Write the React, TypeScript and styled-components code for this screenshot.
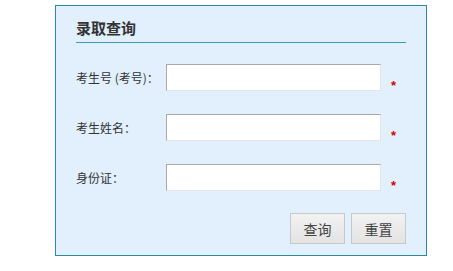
import React from "react";
import styled, { createGlobalStyle } from "styled-components";

const Global = createGlobalStyle`
  html, body { margin: 0; padding: 0; background: #fff; }
  body { font-family: "SimSun", "Noto Sans CJK SC", "DejaVu Sans", sans-serif; }
`;

const Page = styled.div`
  padding: 5px 0 0 55px;
`;

const Panel = styled.div`
  width: 372px;
  height: 251px;
  box-sizing: border-box;
  border: 1px solid #2a8ca2;
  background: #e1f0fc;
  padding: 0 20px 0 20px;
  display: flex;
  flex-direction: column;
`;

const Title = styled.h2`
  margin: 0;
  padding-top: 10px;
  height: 26px;
  line-height: 24px;
  font-size: 15px;
  font-weight: bold;
  color: #333;
  border-bottom: 1px solid #3a9db4;
`;

const Form = styled.div`
  display: flex;
  flex-direction: column;
  gap: 23px;
  padding-top: 21px;
`;

const Row = styled.div`
  display: flex;
  align-items: center;
  height: 27px;
`;

const Label = styled.span`
  width: 90px;
  font-size: 12px;
  color: #333;
`;

const Input = styled.input`
  width: 215px;
  height: 27px;
  box-sizing: border-box;
  border: 1px solid;
  border-color: #a9a9a9 #e4e4e4 #e4e4e4 #a9a9a9;
  background: #fff;
  margin: 0;
  padding: 0 4px;
  outline: none;
`;

const Star = styled.span`
  align-self: flex-end;
  margin-left: 10px;
  margin-bottom: -2px;
  color: #d60000;
  font-size: 13px;
  line-height: 14px;
  font-family: "Liberation Sans", sans-serif;
  font-weight: bold;
`;

const Actions = styled.div`
  display: flex;
  justify-content: flex-end;
  gap: 6px;
  padding-top: 22px;
`;

const Button = styled.button`
  width: 55px;
  height: 31px;
  border: 1px solid #c9c9c9;
  background: linear-gradient(#f2f2f2, #e3e3e3);
  color: #444;
  font-size: 14px;
  font-family: "Noto Sans CJK SC", sans-serif;
  padding: 0;
  cursor: pointer;
`;

const fields = ["考生号 (考号)：", "考生姓名：", "身份证："];

export default function App() {
  return (
    <>
      <Global />
      <Page>
        <Panel>
          <Title>录取查询</Title>
          <Form>
            {fields.map((f) => (
              <Row key={f}>
                <Label>{f}</Label>
                <Input type="text" />
                <Star>*</Star>
              </Row>
            ))}
          </Form>
          <Actions>
            <Button>查询</Button>
            <Button>重置</Button>
          </Actions>
        </Panel>
      </Page>
    </>
  );
}
